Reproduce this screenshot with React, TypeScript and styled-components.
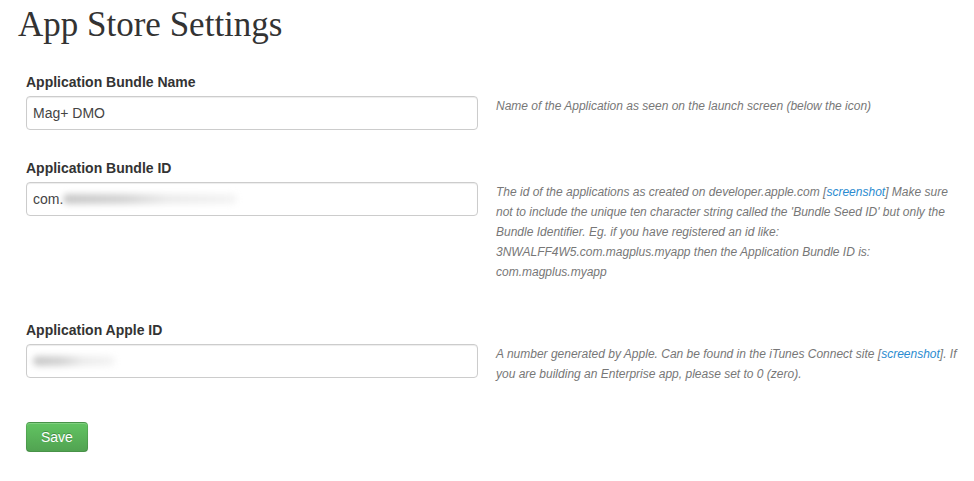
import React from 'react'
import styled, { createGlobalStyle } from 'styled-components'

const GlobalStyle = createGlobalStyle`
  body {
    margin: 0;
    background: #fff;
    font-family: 'Liberation Sans', Arial, sans-serif;
    color: #333;
  }
`

const Page = styled.div`
  padding: 3px 0 0 18px;
  width: 974px;
  box-sizing: border-box;
`

const Title = styled.h1`
  margin: 0 0 25px;
  font-family: 'Liberation Serif', Georgia, serif;
  font-weight: normal;
  font-size: 35px;
  line-height: 44px;
  color: #333;
`

const Form = styled.form`
  padding-left: 8px;
  display: flex;
  flex-direction: column;
`

const Field = styled.div`
  display: grid;
  grid-template-columns: 452px 1fr;
  column-gap: 18px;
  align-items: start;
  margin-bottom: 28px;
`

const Label = styled.label`
  grid-column: 1 / span 2;
  font-size: 14px;
  font-weight: bold;
  line-height: 20px;
  margin-bottom: 4px;
  color: #333;
`

const Input = styled.div`
  height: 34px;
  box-sizing: border-box;
  border: 1px solid #ccc;
  border-radius: 4px;
  box-shadow: inset 0 1px 1px rgba(0, 0, 0, 0.075);
  padding: 0 6px;
  display: flex;
  align-items: center;
  font-size: 14px;
  color: #444;
  white-space: nowrap;
  overflow: hidden;
`

const Blurred = styled.span<{ $width: number }>`
  display: inline-block;
  width: ${({ $width }) => $width}px;
  height: 10px;
  border-radius: 5px;
  background: linear-gradient(90deg, #c8c8c8 0%, #d4d4d4 35%, #ececec 60%, #f4f4f4 100%);
  filter: blur(3px);
`

const Help = styled.p`
  margin: 0 0 10px;
  font-size: 12px;
  line-height: 20px;
  font-style: italic;
  color: #777;
  padding-right: 10px;

  a {
    color: #2a8bd0;
    text-decoration: none;
  }
`

const SaveButton = styled.button`
  align-self: flex-start;
  font-family: 'Liberation Sans', Arial, sans-serif;
  font-size: 14px;
  line-height: 20px;
  padding: 4px 14px;
  color: #fff;
  text-shadow: 0 -1px 0 rgba(0, 0, 0, 0.25);
  background: linear-gradient(to bottom, #62c462, #51a351);
  border: 1px solid;
  border-color: rgba(0, 0, 0, 0.1) rgba(0, 0, 0, 0.1) rgba(0, 0, 0, 0.25);
  border-radius: 4px;
  box-shadow: inset 0 1px 0 rgba(255, 255, 255, 0.2), 0 1px 2px rgba(0, 0, 0, 0.05);
  cursor: pointer;
`

export default function App() {
  return (
    <Page>
      <GlobalStyle />
      <Title>App Store Settings</Title>
      <Form onSubmit={(e) => e.preventDefault()}>
        <Field>
          <Label>Application Bundle Name</Label>
          <Input>Mag+ DMO</Input>
          <Help>Name of the Application as seen on the launch screen (below the icon)</Help>
        </Field>
        <Field>
          <Label>Application Bundle ID</Label>
          <Input>
            com.
            <Blurred $width={174} />
          </Input>
          <Help>
            The id of the applications as created on developer.apple.com [<a href="#">screenshot</a>] Make sure
            not to include the unique ten character string called the 'Bundle Seed ID' but only the Bundle
            Identifier. Eg. if you have registered an id like: 3NWALFF4W5.com.magplus.myapp then the
            Application Bundle ID is: com.magplus.myapp
          </Help>
        </Field>
        <Field>
          <Label>Application Apple ID</Label>
          <Input>
            <Blurred $width={82} />
          </Input>
          <Help>
            A number generated by Apple. Can be found in the iTunes Connect site [<a href="#">screenshot</a>]. If
            you are building an Enterprise app, please set to 0 (zero).
          </Help>
        </Field>
        <SaveButton type="submit">Save</SaveButton>
      </Form>
    </Page>
  )
}
